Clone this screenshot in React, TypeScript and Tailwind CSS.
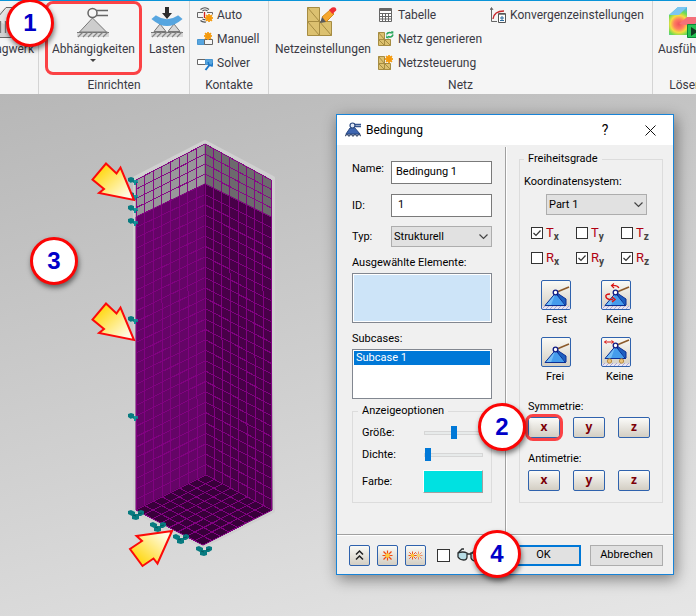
import { useState, type ReactNode } from "react";
import { clsx } from "clsx";

/* ---------- Shared bits ---------- */

const StepBadge = ({ step, className }: { step: number; className: string }) => (
  <span
    className={clsx(
      "absolute z-20 flex size-12 items-center justify-center rounded-full border-3 border-[#fb0505] bg-white font-['Liberation_Sans',sans-serif] text-2xl font-bold text-[#0000c8] shadow-[1px_3px_5px_rgba(0,0,0,0.5)]",
      className
    )}
  >
    {step}
  </span>
);

/* ---------- Ribbon icons ---------- */

const Hatch = ({ y }: { y: number }) => (
  <g>
    <path d={`M0 ${y}H32V${y + 5}H0Z`} fill="#d8d8d8" />
    <path d={`M0 ${y + 0.5}H32`} stroke="#777" />
    <path
      d={`M1 ${y + 5}l5-5M6 ${y + 5}l5-5M11 ${y + 5}l5-5M16 ${y + 5}l5-5M21 ${y + 5}l5-5M26 ${y + 5}l5-5`}
      stroke="#858585"
      strokeWidth="1.2"
    />
  </g>
);

const TrussIcon = () => (
  <svg width="40" height="32" viewBox="0 0 40 32" fill="none">
    <path d="M2 10h34v20H2z" fill="#d2d2d2" />
    <path d="M2 10L17 .500h18l4 9.500v20" fill="#e4e4e4" />
    <path d="M9 10L17 .500H35M2 30.500h36" stroke="#666" />
    <path d="M11.500 14v12M16.500 14v12" stroke="#777" strokeWidth="1.300" />
  </svg>
);

const ConstraintIcon = () => (
  <svg width="32" height="32" viewBox="0 0 32 32" fill="none">
    <Hatch y={25} />
    <path d="M15.500 11L2.500 25H29.500Z" fill="#cdcdcd" stroke="#777" />
    <path d="M18 3.500H31M18 8.500H31" stroke="#666" strokeWidth="1.500" />
    <circle cx="15.500" cy="6" r="4.500" fill="#f5f5f5" stroke="#666" strokeWidth="1.500" />
  </svg>
);

const LoadIcon = () => (
  <svg width="32" height="32" viewBox="0 0 32 32" fill="none">
    <Hatch y={25} />
    <path d="M9 17L3 24.500H15ZM23 17l-6 7.500H29Z" fill="#d8d8d8" stroke="#777" />
    <path d="M2 12Q16 24 30 12L27 9.500Q16 17 5 9.500Z" fill="#57a6e0" stroke="#57a6e0" strokeWidth="2" />
    <path d="M14 0h4v6h3l-5 6-5-6h3z" fill="#2d2d2d" />
  </svg>
);

const Star = ({ x, y }: { x: number; y: number }) => (
  <path
    transform={`translate(${x} ${y})`}
    d="M0-4L1-2 3-3 2-1 4 0 2 1 3 3 1 2 0 4-1 2-3 3-2 1-4 0-2-1-3-3-1-2Z"
    fill="#f59a0c"
    stroke="#f59a0c"
  />
);

const AutoIcon = () => (
  <svg width="16" height="16" viewBox="0 0 16 16" fill="none">
    <path d="M6 5.500H.500v5H6M10 5.500h5.500v2" stroke="#666" />
    <path d="M3.500 2.500Q8-1 12 2.500M5.500 4q2.500-2 5 0M3.500 13.500Q5.500 15.500 9 15M5.500 12q1.500 1 3 .500" stroke="#555" strokeWidth="1.200" />
    <path d="M7.500 5v6" stroke="#d02020" strokeWidth="1.300" />
    <Star x={12} y={11} />
  </svg>
);

const ManualIcon = () => (
  <svg width="16" height="16" viewBox="0 0 16 16" fill="none">
    <path d="M.500 8.500h7v5h-7z" fill="#57a6e0" stroke="#4a96d0" />
    <path d="M7.500 8.500h8v5h-8z" fill="#f5f5f5" stroke="#666" />
    <Star x={11} y={5} />
  </svg>
);

const SolverIcon = () => (
  <svg width="16" height="16" viewBox="0 0 16 16" fill="none">
    <path d="M.500 4.500h8v5h-8z" fill="#fff" stroke="#666" />
    <path d="M8.500 4.500h7v5h-7z" fill="#57a6e0" stroke="#4a96d0" />
    <path d="M8.500 15l4-5" stroke="#1d78c8" strokeWidth="2" />
    <path d="M11 7l1 3 3 1 1-3" stroke="#1d78c8" strokeWidth="1.500" />
  </svg>
);

const MeshSettingsIcon = () => (
  <svg width="32" height="32" viewBox="0 0 32 32" fill="none">
    <path d="M.500.500h12v14H.500zM.500 14.500h12v14H.500zM12.500 14.500h12v14h-12z" fill="#dcc170" />
    <path
      d="M.500.500h12v14H.500zM.500 14.500h12v14H.500zM12.500 14.500h12v14h-12zM.500.500l12 14M.500 14.500l12 14M12.500 14.500l12 14"
      stroke="#a68c42"
    />
    <path d="M15 10l8-7 4 4-8 8z" fill="#f6a72e" stroke="#d58a1a" />
    <path d="M13 16l2-6 4 5z" fill="#5a5a5a" />
    <path d="M22 3l3-2.500q3-1 4 1t-1 3l-2.500 2.500z" fill="#ef2e34" />
  </svg>
);

const TableIcon = () => (
  <svg width="16" height="16" viewBox="0 0 16 16" fill="none" stroke="#666">
    <path d="M1.500 1.500h12v13h-12z" fill="#fff" />
    <path d="M1 3h13" strokeWidth="2" />
    <path d="M1 6.500h13M1 9.500h13M1 12h13M4.500 6v9M7.500 6v9M10.500 6v9" />
  </svg>
);

const SmallMesh = () => (
  <g stroke="#a68c42">
    <path d="M.500 1.500h6v7h-6zM.500 8.500h6v6h-6zM6.500 8.500h6v6h-6z" fill="#dcc170" />
    <path d="M.500 1.500l6 7M.500 8.500l6 6M6.500 8.500l6 6" />
  </g>
);

const MeshGenerateIcon = () => (
  <svg width="16" height="16" viewBox="0 0 16 16" fill="none">
    <SmallMesh />
    <path d="M8.500 3.500Q10 .500 14 2M15 3.500Q14 7 10 5.500" stroke="#27a45a" strokeWidth="1.600" />
    <path d="M13 0l2.500.500-.500 3zM11 7.500L8 7l.500-3z" fill="#27a45a" />
  </svg>
);

const MeshControlIcon = () => (
  <svg width="16" height="16" viewBox="0 0 16 16" fill="none">
    <SmallMesh />
    <Star x={11} y={4} />
  </svg>
);

const ConvergenceIcon = () => (
  <svg width="16" height="16" viewBox="0 0 16 16" fill="none">
    <path d="M1.500 1v13.500H7M0 3l1.500-2.500L3 3" stroke="#666" />
    <path d="M3 12Q4 4 14 4" stroke="#c8282c" strokeWidth="1.300" />
    <path d="M8.500 6.500h7v9h-7z" fill="#fff" stroke="#555" />
    <path d="M9 7.500h6" stroke="#888" />
    <path d="M12 9v4M10 11h4M10 13.500h4" stroke="#2c6da0" />
  </svg>
);

const RunIcon = () => (
  <svg width="32" height="32" viewBox="0 0 32 32" fill="none">
    <defs>
      <radialGradient id="stress" cx="10" cy="17" r="17" gradientUnits="userSpaceOnUse">
        <stop offset="0" stopColor="#f0505c" />
        <stop offset="0.300" stopColor="#ff8060" />
        <stop offset="0.500" stopColor="#f5dc40" />
        <stop offset="0.720" stopColor="#6edc50" />
        <stop offset="1" stopColor="#48b8e8" />
      </radialGradient>
    </defs>
    <path d="M0 8L9 0h9v10h14v8L20 28H0z" fill="url(#stress)" />
    <path d="M0 8L9 0h9l-8 8z" fill="#7cc6f2" />
    <path d="M10 17l8-7h14v2l-9 7z" fill="#f4707a" />
    <path d="M18.500 17.500H32v13H18.500z" fill="#26c354" stroke="#0a8b37" />
    <path d="M22 20v9l7-4.500z" fill="#113c22" />
  </svg>
);

/* ---------- Ribbon ---------- */

const BigButton = ({ icon, label, menu }: { icon: ReactNode; label: string; menu?: boolean }) => (
  <button type="button" className="flex flex-col items-center whitespace-nowrap">
    {icon}
    <span className="leading-5">{label}</span>
    {menu && <span className="border-x-3 border-t-3 border-x-transparent border-t-[#444]" />}
  </button>
);

const SmallButton = ({ icon, label }: { icon: ReactNode; label: string }) => (
  <button type="button" className="flex h-6 items-center gap-1 whitespace-nowrap">
    {icon}
    <span>{label}</span>
  </button>
);

const RibbonGroup = ({ title, className, children }: { title: string; className?: string; children: ReactNode }) => (
  <section className={clsx("flex h-full flex-col border-r border-[#d4d4d4]", className)}>
    <div className="flex flex-1 items-start">{children}</div>
    <h2 className="pb-px text-center leading-4">{title}</h2>
  </section>
);

const Ribbon = () => (
  <header className="flex h-[94px] overflow-hidden border-t border-[#0a94d8] bg-[#f5f5f5] font-['Roboto',sans-serif] text-[12px] text-[#3a3a44]">
    <RibbonGroup title="" className="w-[39px] shrink-0 overflow-hidden">
      <div className="flex w-full justify-end pt-1.5 pr-1">
        <BigButton icon={<TrussIcon />} label="Tragwerk" />
      </div>
    </RibbonGroup>
    <RibbonGroup title="Einrichten" className="w-[151px] shrink-0">
      <div className="relative flex flex-1 gap-3.5 pt-1.5 pl-[13px]">
        <div className="absolute top-0 left-1.5 h-[74px] w-[97px] rounded-lg border-3 border-[#fb4245]" />
        <BigButton icon={<ConstraintIcon />} label="Abhängigkeiten" menu />
        <BigButton icon={<LoadIcon />} label="Lasten" />
      </div>
    </RibbonGroup>
    <RibbonGroup title="Kontakte" className="w-[79px] shrink-0">
      <div className="flex flex-col pt-0.5 pl-[7px]">
        <SmallButton icon={<AutoIcon />} label="Auto" />
        <SmallButton icon={<ManualIcon />} label="Manuell" />
        <SmallButton icon={<SolverIcon />} label="Solver" />
      </div>
    </RibbonGroup>
    <RibbonGroup title="Netz" className="min-w-[384px] flex-1">
      <div className="flex pt-1.5 pl-1.5">
        <BigButton icon={<MeshSettingsIcon />} label="Netzeinstellungen" />
      </div>
      <div className="flex flex-col pt-0.5 pl-[7px]">
        <SmallButton icon={<TableIcon />} label="Tabelle" />
        <SmallButton icon={<MeshGenerateIcon />} label="Netz generieren" />
        <SmallButton icon={<MeshControlIcon />} label="Netzsteuerung" />
      </div>
      <div className="pt-0.5 pl-2">
        <SmallButton icon={<ConvergenceIcon />} label="Konvergenzeinstellungen" />
      </div>
    </RibbonGroup>
    <RibbonGroup title="Lösen" className="-mr-[23px] w-[66px] shrink-0">
      <div className="flex flex-1 justify-center pt-1.5">
        <BigButton icon={<RunIcon />} label="Ausführen" />
      </div>
    </RibbonGroup>
  </header>
);

/* ---------- 3D model ---------- */

type Point = [number, number];

const lerp = (a: Point, b: Point, t: number): Point => [a[0] + (b[0] - a[0]) * t, a[1] + (b[1] - a[1]) * t];

// mesh lines of a quad given as a-b-c-d, with cols along a-b and rows along a-d
const gridPath = (a: Point, b: Point, c: Point, d: Point, cols: number, rows: number) => {
  const parts: string[] = [];
  for (let i = 0; i <= cols; i++) parts.push(`M${lerp(a, b, i / cols)}L${lerp(d, c, i / cols)}`);
  for (let j = 0; j <= rows; j++) parts.push(`M${lerp(a, d, j / rows)}L${lerp(b, c, j / rows)}`);
  return parts.join("");
};

interface Face {
  quad: [Point, Point, Point, Point];
  fill: string;
  line: string;
  cols: number;
  rows: number;
}

const FACES: Face[] = [
  { quad: [[136, 180], [205, 144], [205, 184], [136, 217]], fill: "#98979a", line: "#850a85", cols: 8, rows: 4 },
  { quad: [[205, 144], [271, 180], [271, 217], [205, 184]], fill: "#6c6a6d", line: "#850a85", cols: 8, rows: 4 },
  { quad: [[136, 217], [205, 184], [206, 475], [136, 510]], fill: "#650467", line: "#800280", cols: 8, rows: 28 },
  { quad: [[205, 184], [271, 217], [272, 510], [206, 475]], fill: "#480048", line: "#800280", cols: 8, rows: 28 },
  { quad: [[136, 510], [206, 475], [272, 510], [203, 545]], fill: "#38003a", line: "#800280", cols: 8, rows: 8 },
];

const SIDE_PINS: Point[] = [[128, 177], [128, 192], [128, 205], [128, 218], [128, 316], [128, 413]];
const FLOOR_PINS: Point[] = [[128, 510], [150, 522], [173, 534], [196, 546]];

const ARROW_DOWN = "106,163.5 116.5,173.5 120.5,167.5 134,200 99,193 104,189 92.5,179.5";
const ARROW_UP = "172,531 136.5,536 142,541 130,549 142.5,566 153.5,558.5 157.5,563.5";

const Model = () => (
  <svg width="200" height="440" viewBox="86 130 200 440" className="absolute top-9 left-[86px]" role="img" aria-label="Modell">
    <defs>
      <linearGradient id="arrow-down" x1="0" y1="0" x2="1" y2="1">
        <stop offset="0.200" stopColor="#ffd91c" />
        <stop offset="0.850" stopColor="#fffbe0" />
      </linearGradient>
      <linearGradient id="arrow-up" x1="0" y1="1" x2="1" y2="0">
        <stop offset="0.200" stopColor="#ffd91c" />
        <stop offset="0.850" stopColor="#fffbe0" />
      </linearGradient>
      <g id="side-pin">
        <path d="M0 1l3-1 3 1v3l2-1v2h2v1H8v2H6V6L4 5 3 6 0 4z" fill="#087b80" />
        <path d="M6 4h4M7 3v5" stroke="#10999d" strokeWidth="1.500" />
      </g>
      <g id="floor-pin">
        <path d="M0 1l3-1 4 2v2h3V1l3-1 3 1v3l-3 2h-2v3l-3 1-4-1V6L2 5 0 4z" fill="#087b80" />
        <path d="M5 5l3 1M10 4l4-1" stroke="#045a5e" />
      </g>
    </defs>
    <path
      d="M135 178L205 142 273 178V511L203 546 135 511Z"
      fill="#d0d0d0"
      stroke="#d0d0d0"
      strokeWidth="4"
      strokeLinejoin="round"
    />
    {FACES.map(({ quad, fill, line, cols, rows }, i) => (
      <g key={i}>
        <polygon points={quad.join(" ")} fill={fill} stroke={fill} />
        <path d={gridPath(...quad, cols, rows)} stroke={line} fill="none" shapeRendering="crispEdges" />
      </g>
    ))}
    {SIDE_PINS.map(([x, y]) => (
      <use key={y} href="#side-pin" x={x} y={y} />
    ))}
    {FLOOR_PINS.map(([x, y]) => (
      <use key={x} href="#floor-pin" x={x} y={y} />
    ))}
    <g stroke="#fc0a0a" strokeWidth="2">
      <polygon points={ARROW_DOWN} fill="url(#arrow-down)" />
      <polygon points={ARROW_DOWN} fill="url(#arrow-down)" transform="translate(0 140)" />
      <polygon points={ARROW_UP} fill="url(#arrow-up)" />
    </g>
  </svg>
);

/* ---------- Dialog icons ---------- */

const DialogIcon = () => (
  <svg width="16" height="16" viewBox="0 0 16 16" fill="none">
    <path d="M0 14l2-2 2 2 2-2 2 2 2-2 2 2 2-2 2 2" stroke="#4b5a78" strokeWidth="1.300" />
    <path d="M5 6l4-1 6 7H1z" fill="#3f66b0" stroke="#29477f" />
    <path d="M9 2.500h7M9 4.500h7" stroke="#35558f" strokeWidth="1.300" />
    <circle cx="7.500" cy="3.500" r="2.500" fill="#dfe8f7" stroke="#29477f" strokeWidth="1.200" />
  </svg>
);

type SupportKind = "fixed" | "rotating" | "free" | "rolling";

const SupportIcon = ({ kind }: { kind: SupportKind }) => {
  const lift = kind === "rolling" ? -4 : 0;
  return (
    <svg width="28" height="28" viewBox="0 0 28 28" fill="none">
      {kind !== "free" && (
        <g>
          <path d="M0 25.500h28v2.500H0z" fill="#e8e6f4" />
          <path d="M0 28l3-3M4 28l3-3M8 28l3-3M12 28l3-3M16 28l3-3M20 28l3-3M24 28l3-3" stroke="#a9a4d4" />
        </g>
      )}
      <g transform={`translate(0 ${lift})`}>
        <path d="M15 12l9 6v6h-5z" fill="#1d5fc0" stroke="#0c2f94" />
        <path d="M13.500 12L3 24.500H24z" fill="#459cec" />
        <path d="M13.500 12L9 24.500H3z" fill="#73bdf6" />
        <path d="M3 24.500L13.500 12 23 24M3 24.500H24" stroke="#0c2f94" />
        <path d="M15 11l12-5" stroke="#8b5a2b" strokeWidth="1.600" />
        <circle cx="13.500" cy="11.500" r="2.300" fill="#fff" stroke="#101c84" strokeWidth="1.300" />
      </g>
      {kind === "rotating" && (
        <g stroke="#d81212" strokeWidth="1.200">
          <path d="M17 7q-2-3-7-2.500M12 2.500L9.500 4.500 12 7" />
          <path d="M8 13Q3 13 4 16t7 2.500M10 16l3 2.500L10 21" strokeWidth="1.500" />
        </g>
      )}
      {kind === "rolling" && (
        <g>
          <circle cx="7.500" cy="23" r="2.200" fill="#e9c27a" stroke="#b98d45" />
          <circle cx="19.500" cy="23" r="2.200" fill="#e9c27a" stroke="#b98d45" />
          <path d="M2.500 4h9M4.500 2.500L2.500 4l2 1.500M9.500 2.500l2 1.500-2 1.500" stroke="#d81212" />
        </g>
      )}
    </svg>
  );
};

const Spark = () => (
  <g>
    <path d="M0-5V5M-5 0H5M-4-4L4 4M-4 4L4-4" stroke="#f04a10" strokeWidth="1.200" />
    <circle r="2.200" fill="#ffc93c" />
  </g>
);

const GlassesIcon = () => (
  <svg width="32" height="16" viewBox="0 0 32 16" fill="none" stroke="#2a2e30" strokeWidth="1.300">
    <path d="M1 6q5-2 9 0v4q0 3-3.500 3T1 10zM14 6h9v5q0 3-4 3t-5-3z" fill="#b8dde6" />
    <path d="M10 7h4M1 6l4-4h2M15 6l4-4h2" />
  </svg>
);

const Chevron = () => (
  <svg width="9" height="6" viewBox="0 0 9 6" className="pointer-events-none absolute top-2 right-1" fill="none">
    <path d="M.500.500l4 4 4-4" stroke="#444" strokeWidth="1.200" />
  </svg>
);

/* ---------- Dialog ---------- */

const DropDown = ({ id, value }: { id: string; value: string }) => (
  <div className="relative w-[101px]">
    <select
      id={id}
      className="block h-[21px] w-full appearance-none border border-[#adadad] bg-[#e1e1e1] pl-0.5"
      defaultValue={value}
    >
      <option>{value}</option>
    </select>
    <Chevron />
  </div>
);

const AXES = ["x", "y", "z"];

const Dof = ({ kind, axis, initial }: { kind: "T" | "R"; axis: string; initial: boolean }) => {
  const [on, setOn] = useState(initial);
  return (
    <label className="flex w-[45px] shrink-0 items-center gap-[3px]">
      <span className="relative block size-3">
        <input
          type="checkbox"
          checked={on}
          onChange={() => setOn(!on)}
          className="block size-3 appearance-none border border-[#333] bg-white"
        />
        {on && (
          <svg width="12" height="12" viewBox="0 0 12 12" className="pointer-events-none absolute inset-0" fill="none">
            <path d="M2.500 6l2.500 2.500L9.500 3.500" stroke="#333" strokeWidth="1.200" />
          </svg>
        )}
      </span>
      <span className="text-[13px] leading-4 text-[#b00010]">
        {kind}
        <sub className="text-[10px] font-bold text-[#444]">{axis}</sub>
      </span>
    </label>
  );
};

const AxisButtons = ({ label, highlight }: { label: string; highlight?: boolean }) => (
  <div role="group" aria-label={label} className="flex gap-[13px]">
    {AXES.map((axis) => (
      <div key={axis} className="relative">
        <button
          type="button"
          className="flex h-[21px] w-8 items-center justify-center rounded-xs border border-[#2f62ad] bg-linear-to-b from-[#fbfbf9] to-[#d3cec3] pb-0.5 font-['Noto_Sans',sans-serif] text-[12px] font-bold text-[#7c0008]"
        >
          {axis}
        </button>
        {highlight && axis === "x" && (
          <span className="pointer-events-none absolute -inset-[3px] rounded-lg border-3 border-[#fb4245]" />
        )}
      </div>
    ))}
  </div>
);

const SupportButton = ({ kind, label }: { kind: SupportKind; label: string }) => (
  <div className="flex w-[60px] flex-col gap-0.5">
    <button
      type="button"
      aria-label={label}
      className="size-[30px] overflow-hidden rounded-xs border border-[#2f62ad] bg-linear-to-b from-[#fafaf6] to-[#d3cec3]"
    >
      <SupportIcon kind={kind} />
    </button>
    <span className="pl-[5px] leading-4">{label}</span>
  </div>
);

const Slider = ({ id, label, value }: { id: string; label: string; value: number }) => (
  <div className="flex h-[22px] items-center justify-between">
    <label htmlFor={id}>{label}</label>
    <input
      id={id}
      type="range"
      defaultValue={value}
      className="w-[59px] appearance-none bg-transparent [&::-webkit-slider-runnable-track]:h-1 [&::-webkit-slider-runnable-track]:border [&::-webkit-slider-runnable-track]:border-[#d6d6d6] [&::-webkit-slider-runnable-track]:bg-[#e7eaea] [&::-webkit-slider-thumb]:-mt-[6px] [&::-webkit-slider-thumb]:h-[13px] [&::-webkit-slider-thumb]:w-1.5 [&::-webkit-slider-thumb]:appearance-none [&::-webkit-slider-thumb]:bg-[#0078d7]"
    />
  </div>
);

const ToolButton = ({ label, children }: { label: string; children: ReactNode }) => (
  <button
    type="button"
    aria-label={label}
    className="flex size-[21px] items-center justify-center rounded-xs border border-[#2f62ad] bg-linear-to-b from-[#fafaf6] to-[#d3cec3]"
  >
    <svg width="19" height="19" viewBox="0 0 19 19" fill="none">
      {children}
    </svg>
  </button>
);

const GeneralPanel = () => (
  <div className="flex w-[169px] shrink-0 flex-col border-r border-[#a0a0a0] pt-3.5 pr-[13px] pl-[15px]">
    <div className="flex justify-between">
      <label htmlFor="name">Name:</label>
      <input id="name" defaultValue="Bedingung 1" className="h-[23px] w-[101px] border border-[#7a7a7a] bg-white px-1 pb-0.5" />
    </div>
    <div className="mt-2.5 flex items-center justify-between">
      <label htmlFor="cid">ID:</label>
      <input id="cid" defaultValue="1" className="h-[23px] w-[101px] border border-[#7a7a7a] bg-white px-1.5 pb-0.5" />
    </div>
    <div className="mt-[9px] flex items-center justify-between">
      <label htmlFor="type">Typ:</label>
      <DropDown id="type" value="Strukturell" />
    </div>

    <h3 className="mt-2 mb-0.5">Ausgewählte Elemente:</h3>
    <div className="h-[50px] border border-[#828790] bg-[#cde4f8] ring-1 ring-white ring-inset" />

    <h3 className="mt-2 mb-0.5">Subcases:</h3>
    <ul role="listbox" aria-label="Subcases" className="h-[50px] border border-[#828790] bg-white p-px">
      <li role="option" aria-selected="true" className="h-[14px] bg-[#0078d7] pl-0.5 leading-[14px] text-white">
        Subcase 1
      </li>
    </ul>

    <fieldset className="mt-1 h-[100px] min-w-0 border border-[#dcdcdc] pr-2 pl-[9px]">
      <legend className="-ml-1 px-1">Anzeigeoptionen</legend>
      <div className="pt-[3px]">
        <Slider id="size" label="Größe:" value={50} />
        <Slider id="density" label="Dichte:" value={0} />
      </div>
      <div className="mt-1 flex items-center justify-between">
        <span>Farbe:</span>
        <button
          type="button"
          aria-label="Farbe"
          className="h-[23px] w-[60px] border border-t-white border-r-[#a0a0a0] border-b-[#a0a0a0] border-l-white bg-[#00e1e1]"
        />
      </div>
    </fieldset>
  </div>
);

const FreedomPanel = () => (
  <div className="min-w-0 flex-1 border-l border-white pt-1 pr-2.5 pl-3">
    <fieldset className="h-[352px] min-w-0 border border-[#dcdcdc] pl-1">
      <legend className="px-1">Freiheitsgrade</legend>
      <label htmlFor="cs" className="mt-[7px] block">
        Koordinatensystem:
      </label>
      <div className="mt-1 pl-[22px]">
        <DropDown id="cs" value="Part 1" />
      </div>
      <div className="mt-2.5 flex flex-col gap-[9px] pl-[7px]">
        <div className="flex">
          {AXES.map((axis) => (
            <Dof key={axis} kind="T" axis={axis} initial={axis === "x"} />
          ))}
        </div>
        <div className="flex">
          {AXES.map((axis) => (
            <Dof key={axis} kind="R" axis={axis} initial={axis !== "x"} />
          ))}
        </div>
      </div>
      <div className="mt-3.5 grid grid-cols-[60px_60px] gap-y-[9px] pl-[17px]">
        <SupportButton kind="fixed" label="Fest" />
        <SupportButton kind="rotating" label="Keine" />
        <SupportButton kind="free" label="Frei" />
        <SupportButton kind="rolling" label="Keine" />
      </div>
      <div className="mt-3.5 flex flex-col gap-0.5 pl-1">
        <span>Symmetrie:</span>
        <AxisButtons label="Symmetrie" highlight />
      </div>
      <div className="mt-[13px] flex flex-col gap-[3px] pl-1">
        <span>Antimetrie:</span>
        <AxisButtons label="Antimetrie" />
      </div>
    </fieldset>
  </div>
);

const Dialog = () => (
  <div
    role="dialog"
    aria-label="Bedingung"
    className="absolute top-5 left-[336px] w-[338px] border border-[#1883d7] bg-[#f0f0f0] font-['Roboto',sans-serif] text-[11px] leading-4 text-black shadow-[2px_4px_14px_rgba(0,0,0,0.45)]"
  >
    <div className="flex h-[30px] items-center bg-white pl-2">
      <DialogIcon />
      <h1 className="flex-1 pl-[5px] text-[12px]">Bedingung</h1>
      <button type="button" aria-label="Hilfe" className="w-11 text-[14px]">
        ?
      </button>
      <button type="button" aria-label="Schließen" className="flex w-[46px] justify-center">
        <svg width="11" height="11" viewBox="0 0 11 11" stroke="#111">
          <path d="M.500.500l10 10M10.500.500l-10 10" />
        </svg>
      </button>
    </div>

    <div className="mt-0.5 flex h-[388px] border-b border-[#a0a0a0]">
      <GeneralPanel />
      <FreedomPanel />
    </div>

    <div className="flex h-[39px] items-center gap-[7px] border-t border-white pr-2.5 pl-3">
      <ToolButton label="Einklappen">
        <path d="M6 8.500l3.500-3.500L13 8.500M6 13.500l3.500-3.500 3.500 3.500" stroke="#222" strokeWidth="1.500" />
      </ToolButton>
      <ToolButton label="Hervorheben">
        <g transform="translate(9.5 9.5)">
          <Spark />
        </g>
      </ToolButton>
      <ToolButton label="Alle hervorheben">
        <g transform="translate(6.5 9.5) scale(.8)">
          <Spark />
        </g>
        <g transform="translate(12.5 9.5) scale(.8)" opacity="0.600">
          <Spark />
        </g>
      </ToolButton>
      <label className="ml-1 flex items-center gap-[7px]">
        <input type="checkbox" aria-label="Vorschau" className="size-[13px] appearance-none border border-[#333] bg-white" />
        <GlassesIcon />
      </label>
      <button type="button" className="ml-auto h-[21px] w-[75px] border-2 border-[#0078d7] bg-[#e1e1e1] leading-4">
        OK
      </button>
      <button type="button" className="ml-0.5 h-[21px] w-[73px] border border-[#adadad] bg-[#e1e1e1]">
        Abbrechen
      </button>
    </div>

    <StepBadge step={2} className="top-[288px] left-[141px]" />
    <StepBadge step={4} className="top-[415px] left-[136px]" />
  </div>
);

const App = () => {
  return (
    <div className="relative flex min-h-screen flex-col overflow-hidden">
      <Ribbon />
      <main className="relative min-h-[522px] flex-1 bg-linear-[165deg] from-[#b7b7b7] to-[#e6e6e6]">
        <Model />
        <Dialog />
        <StepBadge step={3} className="top-[143px] left-[30px]" />
      </main>
      <StepBadge step={1} className="-top-px left-1.5" />
    </div>
  );
};

export default App;
